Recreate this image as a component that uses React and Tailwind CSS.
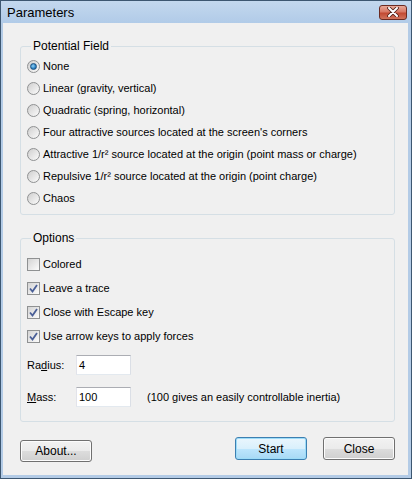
import React from "react";

const font = { fontFamily: '"Liberation Sans", Arial, sans-serif' };

function Radio({ checked, label }) {
  return (
    <div className="flex h-[22px] items-center">
      <span className="relative flex h-[13px] w-[13px] items-center justify-center rounded-full border border-[#8f9192] bg-gradient-to-br from-[#cfcfcf] to-[#fbfbfb]">
        {checked && (
          <span className="h-[7px] w-[7px] rounded-full border border-[#1c5180] bg-[radial-gradient(circle_at_40%_40%,#8fd1f6,#2a7fc0_60%,#145090)]" />
        )}
      </span>
      <span className="ml-[3px]">{label}</span>
    </div>
  );
}

function Check({ checked, label }) {
  return (
    <div className="flex h-[24px] items-center">
      <span className="flex h-[13px] w-[13px] items-center justify-center border border-[#8f9192] bg-gradient-to-br from-[#d4d4d4] to-[#fcfcfc]">
        {checked && (
          <svg width="9" height="9" viewBox="0 0 9 9">
            <path d="M1 4.5 L3.5 7.5 L8 1" fill="none" stroke="#4a5f97" strokeWidth="1.8" />
          </svg>
        )}
      </span>
      <span className="ml-[3px]">{label}</span>
    </div>
  );
}

function Btn({ children, focused, className = "" }) {
  return (
    <button
      className={`flex items-center justify-center rounded-[3px] border ${
        focused
          ? "border-[#3c7fb1] bg-[linear-gradient(#eaf6fd_0%,#d9f0fc_50%,#bee6fd_50%,#a7d9f5_100%)] shadow-[inset_0_0_0_1px_#9ddcf8]"
          : "border-[#707070] bg-[linear-gradient(#f2f2f2_0%,#ebebeb_50%,#dddddd_50%,#cfcfcf_100%)] shadow-[inset_0_0_0_1px_#fcfcfc]"
      } w-[72px] text-[12px] text-black ${className}`}
    >
      {children}
    </button>
  );
}

export default function App() {
  return (
    <div
      className="flex h-[479px] w-[412px] flex-col border border-[#3d5771] bg-[#b3cbe6] text-[11px] text-black"
      style={font}
    >
      <div className="flex h-[22px] items-center justify-between bg-gradient-to-b from-[#c3d8ee] to-[#b1cbe8] pl-[6px] pr-[4px]">
        <span className="text-[13px] leading-none">Parameters</span>
        <span className="flex h-[15px] w-[28px] items-center justify-center rounded-[3px] border border-[#6b2b22] bg-[linear-gradient(#e8a898_0%,#d77865_45%,#c24a33_55%,#d0735c_100%)]">
          <svg width="12" height="10" viewBox="0 0 12 10">
            <path d="M2 1 L10 9 M10 1 L2 9" stroke="#4a1d16" strokeWidth="3.6" strokeLinecap="round" />
            <path d="M2 1 L10 9 M10 1 L2 9" stroke="#ffffff" strokeWidth="2" strokeLinecap="round" />
          </svg>
        </span>
      </div>
      <div className="mb-[3px] ml-[2px] mr-[3px] flex flex-1 flex-col bg-[#f0f0f0] pl-[17px] pr-[13px]">
        <fieldset className="mt-[15px] rounded-[3px] border border-[#d5dfe5] pb-[5px] pl-[6px]">
          <legend className="ml-[4px] px-[2px] text-[12px] leading-[16px]">Potential Field</legend>
          <div className="pt-[1px] text-[11px]">
            <Radio checked label="None" />
            <Radio label="Linear (gravity, vertical)" />
            <Radio label="Quadratic (spring, horizontal)" />
            <Radio label="Four attractive sources located at the screen's corners" />
            <Radio label="Attractive 1/r² source located at the origin (point mass or charge)" />
            <Radio label="Repulsive 1/r² source located at the origin (point charge)" />
            <Radio label="Chaos" />
          </div>
        </fieldset>
        <fieldset className="mt-[15px] rounded-[3px] border border-[#d5dfe5] pb-[14px] pl-[6px] text-[11px]">
          <legend className="ml-[4px] px-[2px] text-[12px] leading-[16px]">Options</legend>
          <div className="pt-[6px]">
            <Check label="Colored" />
            <Check checked label="Leave a trace" />
            <Check checked label="Close with Escape key" />
            <Check checked label="Use arrow keys to apply forces" />
          </div>
          <div className="mt-[7px] flex h-[20px] items-center">
            <span className="w-[49px]">
              Ra<span className="underline">d</span>ius:
            </span>
            <div className="flex h-[20px] w-[55px] items-center border border-[#abadb3] border-b-[#e3e9ef] border-l-[#e2e3ea] border-r-[#dbdfe6] bg-white pl-[2px]">
              4
            </div>
          </div>
          <div className="mt-[12px] flex h-[20px] items-center">
            <span className="w-[49px]">
              <span className="underline">M</span>ass:
            </span>
            <div className="flex h-[20px] w-[55px] items-center border border-[#abadb3] border-b-[#e3e9ef] border-l-[#e2e3ea] border-r-[#dbdfe6] bg-white pl-[2px]">
              100
            </div>
            <span className="ml-[16px]">(100 gives an easily controllable inertia)</span>
          </div>
        </fieldset>
        <div className="mt-[15px] flex items-start">
          <Btn className="mt-[3px] h-[22px]">About...</Btn>
          <div className="flex-1" />
          <Btn focused className="h-[23px]">Start</Btn>
          <Btn className="ml-[16px] h-[23px]">Close</Btn>
        </div>
      </div>
    </div>
  );
}
